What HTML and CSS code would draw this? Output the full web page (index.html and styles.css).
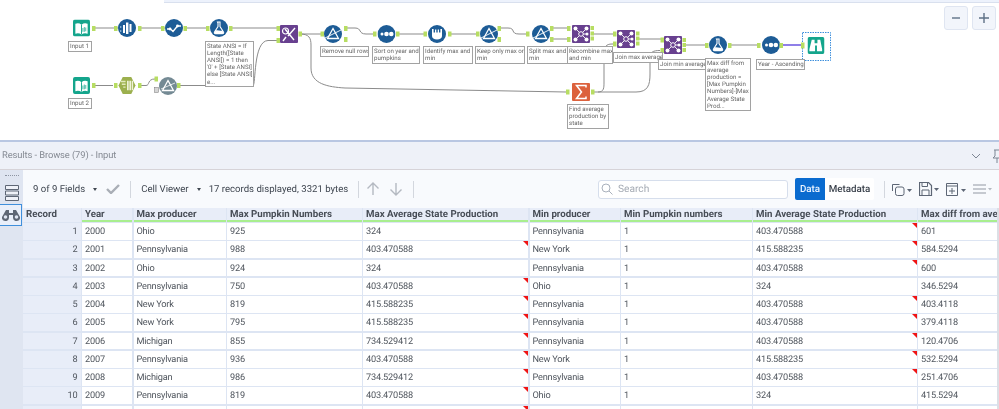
FILE: index.html
```html
<!DOCTYPE html>
<html lang="en">
<head>
<meta charset="utf-8">
<title>Results - Browse</title>
<link rel="stylesheet" href="styles.css">
</head>
<body>
<svg class="defs" width="0" height="0" aria-hidden="true">
  <defs>
    <symbol id="i-book" viewBox="0 0 18 18"><rect width="18" height="18" rx="2" fill="#14a58c"/><path d="M2.500 4.500c2.500-1 4.500-.6 6.500 1 2-1.600 4-2 6.500-1V15c-2.500-1-4.500-.6-6.500.8C7 14.400 5 14 2.500 15z" fill="#fff"/><path d="M9 5.500v10" stroke="#14a58c"/><path d="M10.500 9v4M12 8v5M13.500 8.500v4" stroke="#14a58c" stroke-width=".8"/></symbol>
    <symbol id="i-select" viewBox="0 0 18 18"><circle cx="9" cy="9" r="9" fill="#1d5c96"/><path d="M5 6h2v8H5zM8 3.500h2.400V15H8zM11.500 5h2v8h-2z" fill="#fff"/><path d="M2 7l2 1-2 1zM2 11l2 1-2 1z" fill="#9dc0de"/></symbol>
    <symbol id="i-check" viewBox="0 0 18 18"><circle cx="9" cy="9" r="9" fill="#1d5c96"/><path d="M2 10h3.500l2.500 2.500 4.500-5.500H16" fill="none" stroke="#fff" stroke-width="1.300"/><circle cx="5" cy="10" r="1.400" fill="#fff"/><circle cx="12.500" cy="7" r="1.400" fill="#fff"/></symbol>
    <symbol id="i-flask" viewBox="0 0 18 18"><circle cx="9" cy="9" r="9" fill="#1d5c96"/><path d="M7.500 3h2.500v4.500l3.500 5.500c.5 1-.1 1.800-1 1.800h-7c-.9 0-1.500-.8-1-1.800L8 7.500V4z" fill="none" stroke="#fff" stroke-width="1.100"/><path d="M5.500 11.500c2-1 4.500 1 7 0l1 2.500-1 1h-7l-1-1z" fill="#fff"/></symbol>
    <symbol id="i-scissors" viewBox="0 0 18 18"><rect width="18" height="18" rx="1" fill="#68408f"/><path d="M5 4l9 11M15 3L8 11" stroke="#fff" stroke-width="1.400" fill="none"/><circle cx="5.500" cy="6" r="3" fill="none" stroke="#fff" stroke-width="1.200"/><path d="M3 16l3-4" stroke="#fff" stroke-width="1.400"/></symbol>
    <symbol id="i-hex" viewBox="0 0 18 18"><path d="M4.500 0h9L18 9l-4.500 9h-9L0 9z" fill="#9cb04e"/><path d="M2.500 4h5v1.500h-5zM3.500 7h4v1.500h-4zM5 10h2.500v1.500H5z" fill="#e2eabb"/><path d="M9 4h1.800v10H9zM11.500 4h1.800v10h-1.800zM14 4h1.500v10H14z" fill="#eef2d8"/></symbol>
    <symbol id="i-greyf" viewBox="0 0 18 18"><circle cx="9" cy="9" r="9" fill="#748a94"/><path d="M9 3.500l5.500 10h-11z" fill="none" stroke="#fff" stroke-width="1.300"/><path d="M2 12l14-6" stroke="#fff" stroke-width=".8"/></symbol>
    <symbol id="i-filter" viewBox="0 0 18 18"><circle cx="9" cy="9" r="9" fill="#1d5c96"/><path d="M9 3.500l5.500 10h-11z" fill="none" stroke="#fff" stroke-width="1.300"/><path d="M1 13L17 5" stroke="#fff" stroke-width=".9"/></symbol>
    <symbol id="i-sort" viewBox="0 0 18 18"><circle cx="9" cy="9" r="9" fill="#1d5c96"/><circle cx="4.500" cy="9" r="1.500" fill="#fff"/><circle cx="9" cy="9" r="2.300" fill="#fff"/><circle cx="13.800" cy="9" r="2.300" fill="#fff"/></symbol>
    <symbol id="i-crown" viewBox="0 0 18 18"><circle cx="9" cy="9" r="9" fill="#1d5c96"/><path d="M4 4h1.600v3.500H7V4.500h1.300v3h1.400v-3H11v3h1.400V4H14v7c0 2-2 3.500-5 3.500S4 13 4 11z" fill="#fff"/></symbol>
    <symbol id="i-join" viewBox="0 0 18 18"><rect width="18" height="18" rx="1" fill="#68408f"/><path d="M4 4l5 5-5 5M14 4L9 9l5 5M9 9h6" stroke="#fff" stroke-width=".9" fill="none"/><circle cx="3.500" cy="3.500" r="2" fill="#fff"/><circle cx="14.500" cy="3.500" r="2" fill="#fff"/><circle cx="3.500" cy="14.500" r="2" fill="#fff"/><circle cx="14.500" cy="14.500" r="2" fill="#fff"/><circle cx="15" cy="9" r="1.500" fill="#fff"/><circle cx="9" cy="9" r="2.300" fill="#68408f" stroke="#fff"/></symbol>
    <symbol id="i-sum" viewBox="0 0 18 18"><rect width="18" height="18" rx="1" fill="#dc613c"/><path d="M14 4.500V2.500H4.500L9.500 9l-5 6.500H14v-2" fill="none" stroke="#fff" stroke-width="1.500"/></symbol>
    <symbol id="i-bino" viewBox="0 0 18 18"><rect width="18" height="18" rx="2" fill="#14a58c"/><path d="M4.500 3h3v3.500h3V3h3l2 10v2h-5.500V9h-2v6H2v-2z" fill="#fff"/></symbol>
  </defs>
</svg>

<main class="app">
  <section class="canvas">
    <div class="topband"></div>
    <svg class="diagram" width="999" height="138" viewBox="0 0 999 138" aria-hidden="true">
      <g class="links">
        <path d="M93 28H118M138 28H165M184 28H208M231 28H278"/>
        <path d="M93 85.500H113M138 85.500H146C150 85.500 147 79 155 79M180 85.500H253C256 85.500 253 41 268 40.500H278"/>
        <path d="M300 34H321M300 34C309 34 311 38 311 45V68C311 84 328 87 345 88L566 92"/>
        <path d="M346 28H355C362 28 358 34 366 34H373M398 34H424M450 34H477M500 28H508C516 28 510 34 519 34H527"/>
        <path d="M552 28H567M552 39H567M592 34H614M593 92H598C604 92 604 88 604 82V53C604 47 606 44 612 44H614M598 92H636C648 92 650 85 650 74V58C650 52 653 50.500 660 50.500"/>
        <path d="M638 39H661M686 45H706M730 45H757"/>
      </g>
      <path class="link-live" d="M782 45H802"/>
      <rect class="selected" x="802.500" y="32.500" width="28" height="28"/>
      <use href="#i-book" x="73" y="19.500" width="17" height="17"/>
      <use href="#i-select" x="118" y="19" width="18" height="18"/>
      <use href="#i-check" x="165" y="19" width="18" height="18"/>
      <use href="#i-flask" x="210" y="19" width="18" height="18"/>
      <use href="#i-scissors" x="280" y="25" width="18" height="18"/>
      <use href="#i-book" x="73" y="77" width="17" height="17"/>
      <use href="#i-hex" x="118" y="77" width="18" height="17"/>
      <use href="#i-greyf" x="159" y="77" width="18" height="18"/>
      <use href="#i-filter" x="324" y="25" width="18" height="18"/>
      <use href="#i-sort" x="377.500" y="25" width="18" height="18"/>
      <use href="#i-crown" x="428" y="25" width="18" height="18"/>
      <use href="#i-filter" x="480" y="25" width="18" height="18"/>
      <use href="#i-filter" x="532" y="25" width="18" height="18"/>
      <use href="#i-join" x="572" y="25" width="18" height="18"/>
      <use href="#i-sum" x="572" y="83" width="18" height="18"/>
      <use href="#i-join" x="617" y="30" width="18" height="18"/>
      <use href="#i-join" x="664" y="36" width="18" height="18"/>
      <use href="#i-flask" x="709" y="36" width="18" height="18"/>
      <use href="#i-sort" x="762" y="36" width="18" height="18"/>
      <use href="#i-bino" x="807.500" y="37" width="17" height="17"/>
      <g class="ports">
        <path d="M92 26h3.500v5H92zM114 26h3.500v5H114zM138 26h3.500v5H138zM161 26h3.500v5H161zM183.500 26h3.500v5h-3.500zM206 26h3.500v5H206zM229 26h3.500v5H229zM276.500 26h3.500v5h-3.500zM276.500 38h3.500v5h-3.500z"/>
        <path d="M92 83h3.500v5H92zM114 83h3.500v5H114zM138 83h3.500v5H138zM154.500 76.500h3.500v5h-3.500zM177 83h3.500v5H177z"/>
        <path d="M298.500 31.500h3.500v5h-3.500zM320.500 31.500h3.500v5h-3.500zM344 26h3.500v5H344zM344 37h3.500v5H344zM373 31.500h3.500v5H373zM396 31.500h3.500v5H396zM423.500 31.500h3.500v5h-3.500zM448 31.500h3.500v5H448zM476 31.500h3.500v5H476zM497.500 26h3.500v5h-3.500zM497.500 37h3.500v5h-3.500zM526 31.500h3.500v5H526zM550 26h3.500v5H550zM550 37h3.500v5H550zM567 26h3.500v5H567zM567 37h3.500v5H567z"/>
        <path d="M590.500 26h3.500v4h-3.500zM590.500 31.500h3.500v4h-3.500zM590.500 36.500h3.500v4h-3.500zM566 89.500h3.500v5H566zM591 89.500h3.500v5H591zM613 31.500h3.500v5H613zM613 41.500h3.500v5H613zM636 31.500h3.500v4h-3.500zM636 36.500h3.500v4h-3.500zM636 41.500h3.500v4h-3.500zM660.500 37.500h3.500v5h-3.500zM660.500 48h3.500v5h-3.500zM682.500 38h3.500v4h-3.500zM682.500 43h3.500v4h-3.500zM682.500 48h3.500v4h-3.500zM705 43h3.500v5H705zM728 43h3.500v5H728zM757 43h3.500v5H757zM779.500 43h3.500v5h-3.500zM801 42.500h3.500v6H801z"/>
      </g>
      <rect class="xport" x="154.500" y="87.500" width="4" height="5"/>
    </svg>
    <div class="note note-in1">Input 1</div>
    <div class="note note-in2">Input 2</div>
    <div class="note note-state">State ANSI = If<br>Length([State<br>ANSI]) = 1 then<br>'0' + [State ANSI]<br>else [State ANSI]<br>e...</div>
    <div class="note note-null">Remove null rows</div>
    <div class="note note-sort">Sort on year and<br>pumpkins</div>
    <div class="note note-ident">Identify max and<br>min</div>
    <div class="note note-keep">Keep only max or<br>min</div>
    <div class="note note-split">Split max and<br>min</div>
    <div class="note note-recomb">Recombine max<br>and min</div>
    <div class="note note-avg">Find average<br>production by<br>state</div>
    <div class="note note-jmax">Join max average</div>
    <div class="note note-jmin">Join min average</div>
    <div class="note note-diff">Max diff from<br>average<br>production =<br>[Max Pumpkin<br>Numbers]-[Max<br>Average State<br>Prod...</div>
    <div class="note note-year">Year - Ascending</div>
    <div class="zoom-controls">
      <button class="zoom-btn" type="button" aria-label="Zoom out"><svg width="12" height="12" viewBox="0 0 12 12"><path d="M2 6h8" stroke="#5f7187" stroke-width="1.400"/></svg></button>
      <button class="zoom-btn" type="button" aria-label="Zoom in"><svg width="12" height="12" viewBox="0 0 12 12"><path d="M1 6h10M6 1v10" stroke="#5f7187" stroke-width="1.400"/></svg></button>
    </div>
  </section>

  <section class="results">
    <header class="titlebar">
      <span class="title">Results - Browse (79) - Input</span>
      <span class="title-actions">
        <svg width="10" height="6" viewBox="0 0 10 6"><path d="M1 1l4 4 4-4" fill="none" stroke="#7d8694"/></svg>
        <svg width="9" height="14" viewBox="0 0 9 14"><path d="M1 1h8M2 1v6L0 9h9M4 9v5" fill="none" stroke="#7d8694"/></svg>
      </span>
    </header>
    <div class="body">
      <aside class="rail">
        <div class="grip"></div>
        <svg class="rail-stack" width="14" height="16" viewBox="0 0 14 16"><path d="M.5.500h13v4H.5zM.5 6h13v4H.5zM.5 11.500h13v4H.5z" fill="#eef1f8" stroke="#5d6675"/></svg>
        <div class="rail-active">
          <svg width="18" height="11" viewBox="0 0 18 11"><path d="M4 0h3v3h4V0h3l4 7a3.500 3.500 0 0 1-7 1V5H7v3a3.500 3.500 0 0 1-7-1z" fill="#5d6675"/><circle cx="3.500" cy="7" r="1.800" fill="#dfe6f4"/><circle cx="14.500" cy="7" r="1.800" fill="#dfe6f4"/></svg>
        </div>
      </aside>
      <div class="content">
        <div class="toolbar">
          <span class="tool-text fields">9 of 9 Fields</span>
          <span class="caret"></span>
          <svg class="tick" width="14" height="10" viewBox="0 0 14 10"><path d="M1 5l4 4 8-8" fill="none" stroke="#a9aeb6" stroke-width="2.400"/></svg>
          <span class="sep"></span>
          <span class="tool-text">Cell Viewer</span>
          <span class="caret"></span>
          <span class="tool-text records">17 records displayed, 3321 bytes</span>
          <span class="sep sep-before-arrows"></span>
          <svg class="arrow" width="14" height="14" viewBox="0 0 14 14"><path d="M7 13V1M1.500 6.500L7 1l5.500 5.500" fill="none" stroke="#b4b9c1" stroke-width="1.400"/></svg>
          <svg class="arrow" width="14" height="14" viewBox="0 0 14 14"><path d="M7 1v12M1.500 7.500L7 13l5.500-5.500" fill="none" stroke="#b4b9c1" stroke-width="1.400"/></svg>
          <span class="sep sep-after-arrows"></span>
          <label class="search">
            <svg width="12" height="12" viewBox="0 0 12 12"><circle cx="5" cy="5" r="4" fill="none" stroke="#a9b1bc"/><path d="M8 8l3.500 3.500" stroke="#a9b1bc"/></svg>
            <span>Search</span>
          </label>
          <div class="segment">
            <span class="seg seg-on">Data</span>
            <span class="seg">Metadata</span>
          </div>
          <span class="sep sep-right"></span>
          <svg class="tool-icon" width="20" height="13" viewBox="0 0 20 13"><path d="M.5 8V1.500h7" fill="none" stroke="#5d6675"/><rect x="3.500" y="4" width="8.500" height="8.500" rx="2" fill="none" stroke="#5d6675"/><path d="M15 6h5l-2.500 3z" fill="#5d6675"/></svg>
          <svg class="tool-icon" width="20" height="14" viewBox="0 0 20 14"><path d="M.5.500h9l3 3v10H.5z" fill="none" stroke="#5d6675" stroke-width="1.200"/><path d="M3 .500v4h5.500v-4M3 13.500V8h7v5.500" fill="none" stroke="#5d6675"/><path d="M15 6h5l-2.500 3z" fill="#5d6675"/></svg>
          <svg class="tool-icon" width="20" height="13" viewBox="0 0 20 13"><path d="M.5.500h11v12H.5zM.5 3h11M6 5v6M3 8h6" fill="none" stroke="#5d6675"/><path d="M15 6h5l-2.500 3z" fill="#5d6675"/></svg>
          <svg class="tool-icon" width="19" height="11" viewBox="0 0 19 11"><path d="M0 1h13M0 5h13M0 9h13" stroke="#b4b9c1" stroke-width="1.400"/><path d="M15 4h4l-2 2.500z" fill="#b4b9c1"/></svg>
        </div>
        <div class="grid-wrap">
          <div class="grid">
            <div class="h h-rec">Record</div><div class="h">Year</div><div class="h">Max producer</div><div class="h">Max Pumpkin Numbers</div><div class="h">Max Average State Production</div><div class="h">Min producer</div><div class="h">Min Pumpkin numbers</div><div class="h">Min Average State Production</div><div class="h">Max diff from ave</div>

            <div class="rec">1</div><div class="c">2000</div><div class="c">Ohio</div><div class="c">925</div><div class="c">324</div><div class="c">Pennsylvania</div><div class="c">1</div><div class="c flag">403.470588</div><div class="c">601</div>
            <div class="rec">2</div><div class="c">2001</div><div class="c">Pennsylvania</div><div class="c">988</div><div class="c flag">403.470588</div><div class="c">New York</div><div class="c">1</div><div class="c flag">415.588235</div><div class="c">584.5294</div>
            <div class="rec">3</div><div class="c">2002</div><div class="c">Ohio</div><div class="c">924</div><div class="c">324</div><div class="c">Pennsylvania</div><div class="c">1</div><div class="c flag">403.470588</div><div class="c">600</div>
            <div class="rec">4</div><div class="c">2003</div><div class="c">Pennsylvania</div><div class="c">750</div><div class="c flag">403.470588</div><div class="c">Ohio</div><div class="c">1</div><div class="c">324</div><div class="c">346.5294</div>
            <div class="rec">5</div><div class="c">2004</div><div class="c">New York</div><div class="c">819</div><div class="c flag">415.588235</div><div class="c">Pennsylvania</div><div class="c">1</div><div class="c flag">403.470588</div><div class="c">403.4118</div>
            <div class="rec">6</div><div class="c">2005</div><div class="c">New York</div><div class="c">795</div><div class="c flag">415.588235</div><div class="c">Pennsylvania</div><div class="c">1</div><div class="c flag">403.470588</div><div class="c">379.4118</div>
            <div class="rec">7</div><div class="c">2006</div><div class="c">Michigan</div><div class="c">855</div><div class="c flag">734.529412</div><div class="c">Pennsylvania</div><div class="c">1</div><div class="c flag">403.470588</div><div class="c">120.4706</div>
            <div class="rec">8</div><div class="c">2007</div><div class="c">Pennsylvania</div><div class="c">936</div><div class="c flag">403.470588</div><div class="c">New York</div><div class="c">1</div><div class="c flag">415.588235</div><div class="c">532.5294</div>
            <div class="rec">9</div><div class="c">2008</div><div class="c">Michigan</div><div class="c">986</div><div class="c flag">734.529412</div><div class="c">Pennsylvania</div><div class="c">1</div><div class="c flag">403.470588</div><div class="c">251.4706</div>
            <div class="rec">10</div><div class="c">2009</div><div class="c">Pennsylvania</div><div class="c">819</div><div class="c flag">403.470588</div><div class="c">Ohio</div><div class="c">1</div><div class="c">324</div><div class="c">415.5294</div>
            <div class="rec"></div><div class="c"></div><div class="c"></div><div class="c"></div><div class="c flag"></div><div class="c"></div><div class="c"></div><div class="c"></div><div class="c"></div>
          </div>
          <div class="scroll-edge"></div>
        </div>
      </div>
    </div>
  </section>
</main>
</body>
</html>
```
FILE: styles.css
```css
* { box-sizing: border-box; }
html, body { margin: 0; padding: 0; }
body {
  width: 999px;
  height: 409px;
  overflow: hidden;
  background: #fff;
  font-family: Roboto, "Open Sans", sans-serif;
  text-rendering: geometricPrecision;
}
.defs { position: absolute; }
.app { display: flex; flex-direction: column; width: 999px; height: 409px; overflow: hidden; }

/* workflow canvas */
.canvas { position: relative; flex: 0 0 140px; background: #fff; filter: blur(.35px); }
.topband { margin-left: 164px; height: 3px; background: #edf2fc; border-bottom: 1px solid #d9e0ee; }
.diagram { position: absolute; left: 0; top: 0; }
.links path { fill: none; stroke: #8b8b8b; stroke-width: 1; }
.link-live { fill: none; stroke: #6a55e0; stroke-width: 1.500; }
.selected { fill: none; stroke: #3d8fdc; stroke-width: 1; stroke-dasharray: 1.500 1; }
.ports path { fill: #b7dd62; }
.xport { fill: #d5d5d5; stroke: #777; stroke-width: .5; }

.note {
  position: absolute;
  font-size: 6.150px;
  line-height: 7.200px;
  color: #666;
  background: #fff;
  border: 1px solid #a2a2a2;
  padding: .5px 0 0 1px;
  overflow: hidden;
  white-space: nowrap;
}
.note-in1 { left: 68px; top: 41px; width: 24px; height: 11px; }
.note-in2 { left: 68px; top: 98px; width: 24px; height: 11px; }
.note-state { left: 205px; top: 41px; width: 49px; height: 46px; }
.note-null { left: 320px; top: 46px; width: 49px; height: 11px; }
.note-sort { left: 372px; top: 46px; width: 48px; height: 18px; }
.note-ident { left: 423px; top: 46px; width: 50px; height: 18px; }
.note-keep { left: 475px; top: 46px; width: 50px; height: 18px; }
.note-split { left: 527px; top: 46px; width: 50px; height: 18px; }
.note-recomb { left: 567px; top: 46px; width: 46px; height: 18px; }
.note-avg { left: 567px; top: 104px; width: 42px; height: 25px; }
.note-jmax { left: 613px; top: 52px; width: 50px; height: 11px; }
.note-jmin { left: 658px; top: 59px; width: 50px; height: 11px; }
.note-diff { left: 705px; top: 58px; width: 46px; height: 53px; }
.note-year { left: 756px; top: 59px; width: 49px; height: 11px; }

.zoom-controls { position: absolute; top: 6px; right: 3px; display: flex; gap: 4px; }
.zoom-btn {
  display: flex; align-items: center; justify-content: center;
  width: 24px; height: 24px; padding: 0;
  background: #f2f5fb; border: 1px solid #dfe5f1; border-radius: 3px;
}

/* results window */
.results { flex: 1; display: flex; flex-direction: column; min-height: 0; filter: blur(.3px); }
.titlebar {
  flex: 0 0 30px;
  display: flex; align-items: center; justify-content: space-between;
  padding: 0 0 0 2px;
  background: #eef1f8;
  border-top: 2px solid #b9c7e2;
  border-bottom: 1px solid #d6d3d8;
}
.title { font-size: 9.400px; letter-spacing: -.1px; color: #858a93; }
.title-actions { display: flex; align-items: center; gap: 12px; margin-right: -3px; }

.body { flex: 1; display: flex; min-height: 0; }
.rail { flex: 0 0 23px; background: #dfe5f1; display: flex; flex-direction: column; align-items: center; padding-top: 5px; }
.grip { width: 14px; height: 2px; border-top: 1px dotted #8d95a3; }
.rail-stack { margin-top: 8px; }
.rail-active {
  width: 22px; height: 22px; margin-top: 3px; align-self: flex-start;
  display: flex; align-items: center; justify-content: center;
  background: #e9effa; border: 1px solid #3f8fdc;
  border-left: 0;
}

.content { flex: 1; display: flex; flex-direction: column; min-width: 0; background: #f7f9fd; }
.toolbar { flex: 0 0 38px; display: flex; align-items: center; padding-left: 10px; background: #f8fafd; }
.tool-text { font-size: 9.600px; color: #3f4650; white-space: nowrap; }
.caret { flex: none; width: 0; height: 0; margin: 0 8px 0 8px; border: 2.500px solid transparent; border-top: 3px solid #3f4650; border-bottom: 0; }
.tick { margin-left: 1px; flex: none; }
.sep { flex: none; width: 1px; height: 17px; margin: 0 10px; background: #d3d7de; }
.sep-before-arrows { margin-right: 6px; }
.sep-after-arrows { margin-left: 2px; }
.arrow { flex: none; margin-left: 1px; margin-right: 8px; }
.search {
  flex: none;
  display: flex; align-items: center; gap: 5px;
  width: 190px; height: 19px; margin-left: auto; padding-left: 2px;
  background: #fff; border: 1px solid #d6deec; border-radius: 3px;
  font-size: 10.200px; color: #a5abb4;
}
.segment { flex: none; display: flex; height: 22px; margin-left: 7px; border-radius: 2px; background: #fff; }
.seg { display: flex; align-items: center; justify-content: center; width: 49px; font-size: 9.800px; font-weight: 500; color: #3c434d; }
.seg-on { width: 30px; background: #0a6bcf; color: #eaf3ff; border-radius: 2px 0 0 2px; }
.sep-right { margin: 0 7px 0 10px; }
.tool-icon { margin-left: 0; margin-right: 7px; flex: none; }

.grid-wrap { flex: 1; display: flex; min-height: 0; overflow: hidden; background: #dde5f3; }
.grid {
  flex: none;
  display: grid;
  grid-template-columns: 57.500px 50px 92px 134.500px 165px 90px 130.500px 163.500px 78.500px;
  grid-auto-rows: 16.750px;
  grid-template-rows: 13.500px;
  gap: 1.500px;
  align-content: start;
}
.h, .c, .rec { font-size: 9.200px; letter-spacing: -.2px; line-height: 17px; white-space: nowrap; overflow: hidden; color: #50565e; padding-left: 3px; position: relative; }
.h { font-size: 9.700px; letter-spacing: 0; line-height: 14px; font-weight: 700; color: #474d56; background: #e8edf8; border-bottom: 2px solid #a9ee8f; }
.h-rec { border-bottom-color: #e8edf8; }
.c { background: #fff; }
.rec { background: #e8edf8; text-align: right; padding: 0 3px 0 0; }
.flag::after {
  content: "";
  position: absolute; right: 0; top: 0;
  border-top: 5px solid #f01414;
  border-left: 5px solid transparent;
}
.scroll-edge { flex: 1; background: #dcdfe5; }
```
